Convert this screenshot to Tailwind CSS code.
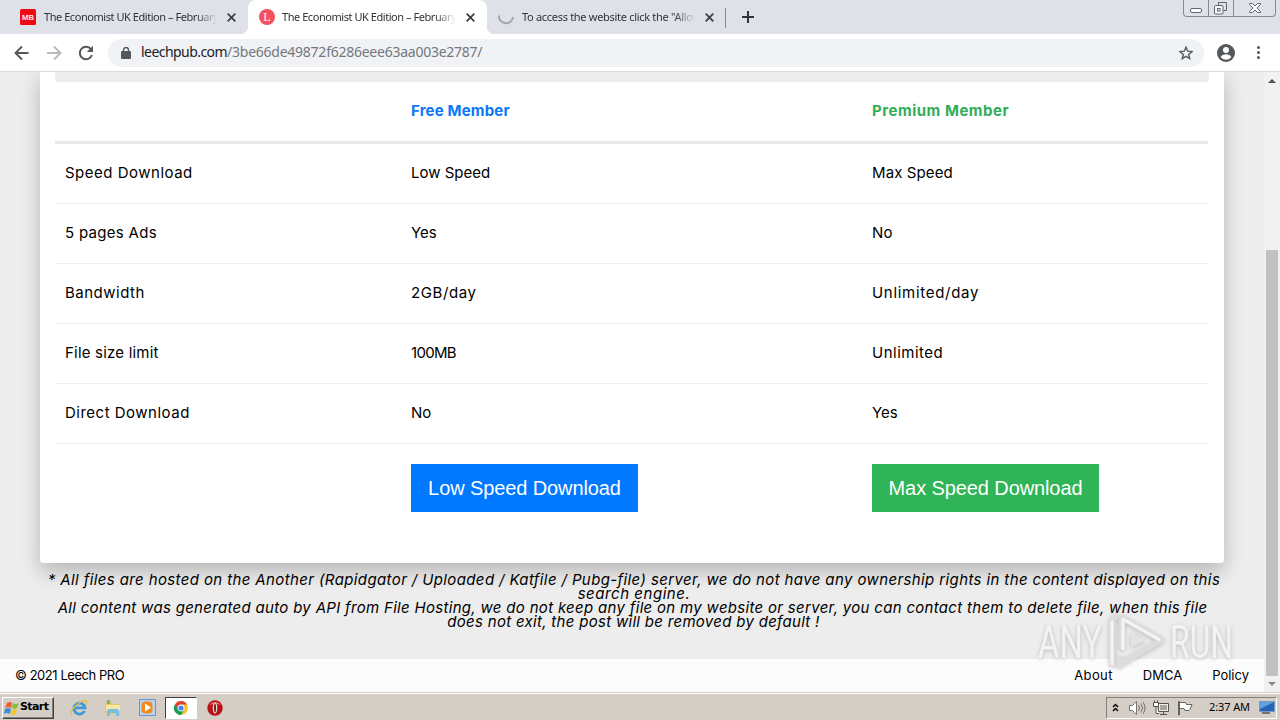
<!DOCTYPE html>
<html lang="en">
  <head>
    <meta charset="UTF-8" />
    <meta name="viewport" content="width=device-width, initial-scale=1.0" />
    <title>The Economist UK Edition – February</title>
    <script src="https://cdn.jsdelivr.net/npm/@tailwindcss/browser@4"></script>
  </head>
  <body class="flex h-[720px] w-[1280px] flex-col overflow-hidden bg-white font-['Noto_Sans',sans-serif] text-black">
    <!-- Tab strip -->
    <header class="relative flex h-[34px] shrink-0 bg-[#dee1e8] text-[11px] text-[#303338]">
      <div class="flex w-[248px] items-center rounded-br-lg pl-5">
        <svg class="h-4 w-4 shrink-0" viewBox="0 0 16 16">
          <rect width="16" height="16" rx="1.5" fill="#ee0a12" />
          <text x="8" y="11" text-anchor="middle" textLength="12" lengthAdjust="spacingAndGlyphs" font-family="Liberation Sans" font-weight="700" font-size="8" fill="#fde8e8">MB</text>
        </svg>
        <span class="ml-2 w-[173px] overflow-hidden whitespace-nowrap tracking-[-0.45px] mask-r-from-88%">The Economist UK Edition – February 2021</span>
        <svg class="ml-2.5 h-[9px] w-[9px]" viewBox="0 0 9 9" fill="none" stroke="#3c4043" stroke-width="1.8"><path d="M.7.7l7.6 7.6M8.3.7L.7 8.3" /></svg>
      </div>
      <div class="relative flex w-[239px] items-center rounded-t-lg bg-white pl-[11px]">
        <span class="absolute bottom-0 -left-2 h-2 w-2 bg-[radial-gradient(circle_at_0_0,#dee1e8_8px,#fff_8.5px)]"></span>
        <span class="absolute -right-2 bottom-0 h-2 w-2 bg-[radial-gradient(circle_at_100%_0,#dee1e8_8px,#fff_8.5px)]"></span>
        <svg class="h-4 w-4 shrink-0" viewBox="0 0 16 16">
          <circle cx="8" cy="8" r="8" fill="#f4515c" />
          <text x="8" y="12" text-anchor="middle" font-family="Liberation Serif" font-size="12" fill="#fff">L</text>
        </svg>
        <span class="ml-[7px] w-[174px] overflow-hidden whitespace-nowrap tracking-[-0.45px] mask-r-from-88%">The Economist UK Edition – February 2021</span>
        <svg class="ml-2.5 h-[9px] w-[9px]" viewBox="0 0 9 9" fill="none" stroke="#3c4043" stroke-width="1.8"><path d="M.7.7l7.6 7.6M8.3.7L.7 8.3" /></svg>
      </div>
      <div class="flex w-[239px] items-center border-r border-transparent pl-[11px]">
        <svg class="h-4 w-4 shrink-0" viewBox="0 0 16 16" fill="none" stroke="#a3a6ab" stroke-width="2"><path d="M1 6.5A7 7 0 1 0 15 8" /></svg>
        <span class="ml-2 w-[173px] overflow-hidden whitespace-nowrap tracking-[-0.3px] mask-r-from-88%">To access the website click the "Allow" button</span>
        <svg class="ml-2.5 h-[9px] w-[9px]" viewBox="0 0 9 9" fill="none" stroke="#3c4043" stroke-width="1.8"><path d="M.7.7l7.6 7.6M8.3.7L.7 8.3" /></svg>
      </div>
      <div class="mt-2 -ml-px h-5 w-px bg-[#85898f]"></div>
      <svg class="mt-[11px] ml-4 h-3 w-3" viewBox="0 0 12 12" fill="none" stroke="#303338" stroke-width="2"><path d="M6 0v12M0 6h12" /></svg>
      <!-- Window buttons -->
      <div class="absolute top-0 right-1 flex h-[17px] w-[93px] rounded-b border border-t-0 border-[#858a96]">
        <svg class="h-4 w-[91px]" viewBox="0 0 91 16" fill="none" stroke="#62656d">
          <path d="M24.500 0v16M49.500 0v16" stroke="#858a96" />
          <rect x="6.500" y="8.500" width="11" height="4" rx="1.500" fill="#fff" />
          <path d="M34.500 5.500v-3h8v8h-3" />
          <rect x="30.500" y="5.500" width="8.500" height="8.500" rx="1" fill="#f7f8fa" />
          <rect x="33.500" y="8.500" width="2.500" height="2.500" />
          <path d="M65.500 3.500h3l2.500 2.500 2.500-2.500h3v1l-3.500 3.500 3.500 3.500v1h-3l-2.500-2.500-2.500 2.500h-3v-1l3.500-3.500-3.500-3.500z" fill="#f7f8fa" />
        </svg>
      </div>
    </header>

    <!-- Toolbar -->
    <div class="flex h-[38px] shrink-0 items-center border-b border-[#d9dadc] bg-white pl-[14px]">
      <svg class="h-4 w-4" viewBox="0 0 16 16" fill="none" stroke="#54575b" stroke-width="1.900"><path d="M14.500 8H1.500M8 1.500L1.500 8 8 14.500" /></svg>
      <svg class="ml-4 h-4 w-4" viewBox="0 0 16 16" fill="none" stroke="#b8babd" stroke-width="1.900"><path d="M1 8h13.500M8 1.500L14.500 8 8 14.500" /></svg>
      <svg class="ml-4 h-4 w-4" viewBox="0 0 16 16"><path d="M13 4.300A6.200 6.200 0 1 0 13.900 10" fill="none" stroke="#54575b" stroke-width="2" /><path d="M15 .800v6.200H8.800z" fill="#54575b" /></svg>
      <div class="ml-[14px] flex h-7 w-[1096px] items-center rounded-full bg-[#f0f2f5] pl-[13px]">
        <svg class="h-3 w-[10px]" viewBox="0 0 10 12"><rect y="4" width="10" height="8" rx="1" fill="#54575b" /><path d="M2.500 5V3a2.500 2.500 0 0 1 5 0v2" fill="none" stroke="#54575b" stroke-width="1.400" /></svg>
        <span class="ml-[10px] pb-0.5 text-[14px] tracking-[-0.25px] whitespace-nowrap text-[#74787d]"><span class="tracking-[-0.55px] text-[#202124]">leechpub.com</span>/3be66de49872f6286eee63aa003e2787/</span>
        <svg class="mr-[11px] ml-auto h-[14px] w-[14px]" viewBox="0 0 14 14" fill="none" stroke="#54575b" stroke-width="1.400"><path d="M7 1.200l1.700 4 4.300.400-3.300 2.800 1 4.200L7 10.400l-3.700 2.200 1-4.200L1 5.600l4.300-.400z" /></svg>
      </div>
      <svg class="ml-[13px] h-[18px] w-[18px]" viewBox="0 0 18 18"><circle cx="9" cy="9" r="9" fill="#54575b" /><circle cx="9" cy="6" r="3" fill="#fff" /><path d="M3.600 13c1-2 3.200-2.800 5.400-2.800s4.400.800 5.400 2.800A6.600 6.600 0 0 1 9 15.700 6.600 6.600 0 0 1 3.600 13z" fill="#fff" /></svg>
      <svg class="ml-[22px] h-[13px] w-[3px]" viewBox="0 0 3 13" fill="#54575b"><circle cx="1.500" cy="1.500" r="1.500" /><circle cx="1.500" cy="6.500" r="1.500" /><circle cx="1.500" cy="11.500" r="1.500" /></svg>
    </div>

    <!-- Page -->
    <div class="flex h-[620px] shrink-0">
      <main class="relative flex w-[1264px] flex-col overflow-hidden bg-[#ededed] font-[Inter,sans-serif]">
        <section class="ml-10 h-[491px] w-[1184px] shrink-0 rounded-b-sm bg-white px-[15px] shadow-[0_8px_20px_rgba(0,0,0,0.24)]">
          <div class="h-[10px] w-[1154px] rounded-b-xs bg-[#ededed]"></div>
          <div class="w-[1153px] text-[15px]">
            <div class="grid h-[62px] grid-cols-[346px_461px_346px] items-center border-b-3 border-[#e8e9ea] font-bold">
              <span></span>
              <span class="pl-[10px] tracking-[0.18px] text-[#0a79f7]">Free Member</span>
              <span class="pl-[10px] tracking-[0.52px] text-[#31ad58]">Premium Member</span>
            </div>
            <div class="grid h-[60px] grid-cols-[346px_461px_346px] items-center border-b border-[#eeeff0] *:pl-[10px]">
              <span class="tracking-[0.5px]">Speed Download</span><span>Low Speed</span><span class="tracking-[0.1px]">Max Speed</span>
            </div>
            <div class="grid h-[60px] grid-cols-[346px_461px_346px] items-center border-b border-[#eeeff0] *:pl-[10px]">
              <span class="tracking-[0.3px]">5 pages Ads</span><span>Yes</span><span class="tracking-[0.3px]">No</span>
            </div>
            <div class="grid h-[60px] grid-cols-[346px_461px_346px] items-center border-b border-[#eeeff0] *:pl-[10px]">
              <span class="tracking-[0.5px]">Bandwidth</span><span class="tracking-[0.6px]">2GB/day</span><span class="tracking-[0.7px]">Unlimited/day</span>
            </div>
            <div class="grid h-[60px] grid-cols-[346px_461px_346px] items-center border-b border-[#eeeff0] *:pl-[10px]">
              <span class="tracking-[0.2px]">File size limit</span><span class="tracking-[-0.7px]">100MB</span><span class="tracking-[0.5px]">Unlimited</span>
            </div>
            <div class="grid h-[60px] grid-cols-[346px_461px_346px] items-center border-b border-[#eeeff0] *:pl-[10px]">
              <span class="tracking-[0.5px]">Direct Download</span><span>No</span><span>Yes</span>
            </div>
            <div class="grid grid-cols-[346px_461px_346px] pt-5 font-['Liberation_Sans',sans-serif] text-[20px] tracking-[-0.1px] text-white">
              <span></span>
              <div class="pl-[10px]"><button class="h-12 w-[227px] bg-[#0078ff] whitespace-nowrap">Low Speed Download</button></div>
              <div class="pl-[10px]"><button class="h-12 w-[227px] bg-[#2fb457] whitespace-nowrap">Max Speed Download</button></div>
            </div>
          </div>
        </section>
        <div class="relative mt-[10px] flex w-[1268px] shrink-0 flex-col items-center text-[15px] leading-[14px] whitespace-nowrap italic">
          <span class="tracking-[0.385px]">* All files are hosted on the Another (Rapidgator / Uploaded / Katfile / Pubg-file) server, we do not have any ownership rights in the content displayed on this</span>
          <span class="tracking-[0.55px]">search engine.</span>
          <span class="-ml-[3px] tracking-[0.31px]">All content was generated auto by API from File Hosting, we do not keep any file on my website or server, you can contact them to delete file, when this file</span>
          <span class="-ml-px tracking-[0.3px]">does not exit, the post will be removed by default !</span>
        </div>
        <footer class="mt-auto flex h-[33px] shrink-0 items-center bg-[#fcfcfc] pr-[15px] pl-[15px] text-[13px]">
          <span class="tracking-[-0.45px]">© 2021 Leech PRO</span>
          <nav class="ml-auto flex gap-[30px]"><a class="tracking-[0.4px]">About</a><a>DMCA</a><a>Policy</a></nav>
        </footer>
        <!-- Watermark -->
        <svg class="absolute top-[536px] left-[1034px] h-16 w-[204px] drop-shadow-[0_1px_2px_rgba(0,0,0,0.22)]" viewBox="0 0 204 64" fill="#f3f3f3" stroke-linejoin="round" font-family="Roboto" font-size="47">
          <text x="4" y="50" textLength="64" lengthAdjust="spacingAndGlyphs">ANY</text>
          <text x="136" y="50" textLength="63" lengthAdjust="spacingAndGlyphs">RUN</text>
          <path d="M78 58V14q0-6 6-5M88 42V10l39 22-42 25V48" fill="none" stroke="#dcdcdc" stroke-width="6" />
          <path d="M89 42V11l37 21M78 57V13" fill="none" stroke="#f5f5f5" stroke-width="3" />
          <path d="M97 24l14 8-14 8z" fill="#e3e3e3" />
        </svg>
      </main>
      <!-- Scrollbar -->
      <aside class="flex w-4 flex-col items-center bg-[#f1f1f1]">
        <svg class="mt-[7px] h-1 w-2" viewBox="0 0 8 4" fill="#505050"><path d="M0 4l4-4 4 4z" /></svg>
        <div class="mt-[167px] h-[426px] w-3 bg-[#c1c1c1]"></div>
        <svg class="mt-[6px] h-1 w-2" viewBox="0 0 8 4" fill="#8a8a8a"><path d="M0 0l4 4 4-4z" /></svg>
      </aside>
    </div>

    <!-- Taskbar -->
    <footer class="flex h-7 shrink-0 items-center border-t border-[#d4d0c8] bg-[#d4cec6] pt-[2px] pl-[2px] shadow-[inset_0_1px_0_#fff]">
      <button class="flex h-[22px] w-[52px] items-center border border-t-white border-r-[#404040] border-b-[#404040] border-l-white pl-px font-['DejaVu_Sans',sans-serif] text-[11px] font-bold tracking-[-0.6px] shadow-[inset_-1px_-1px_0_#858078]">
        <svg class="h-4 w-4 shrink-0" viewBox="0 0 16 16"><path d="M3 3q3-2 5 0L7 8Q4 6 1 8z" fill="#e8602c" /><path d="M9 3q3 2 6 0l-2 5q-2 2-5 0z" fill="#8bbd3c" /><path d="M1 9q3-2 6 0l-1 5q-3-2-6 0z" fill="#3c8cdc" /><path d="M8 9q2 2 5 0l-1 5q-3 2-5 0z" fill="#f5c52c" /></svg>
        <span>Start</span>
      </button>
      <svg class="ml-4 h-[18px] w-[18px]" viewBox="0 0 18 18" fill="none"><path d="M14.500 12A5.500 5.500 0 1 1 15 8.800H5" stroke="#3b9add" stroke-width="2.800" /><path d="M2 16Q-1 13 6 6.500T16.500 2q1 1.500-1 4" stroke="#e8ba42" stroke-width="1.300" /></svg>
      <svg class="ml-4 h-[18px] w-[18px]" viewBox="0 0 18 18"><path d="M1 3h6l1 2h8v10H1z" fill="#e7c864" /><path d="M3 1h3v4H3z" fill="#74b77a" /><path d="M2 6h14v6H2z" fill="#f7e7a2" /><path d="M3 17v-5q0-2 2-2h8q2 0 2 2v5h-3v-3H6v3z" fill="#79bfe2" /></svg>
      <svg class="ml-[17px] h-[17px] w-[17px]" viewBox="0 0 17 17"><rect x=".5" y=".5" width="16" height="16" fill="#b9d4ef" stroke="#6b95c4" /><rect x="2.500" y="2.500" width="11" height="12" rx="4" fill="#f28a1c" /><path d="M6 4.500l6 4-6 4z" fill="#fff" /></svg>
      <div class="ml-[9px] flex h-[22px] w-8 items-center justify-center border border-t-[#404040] border-r-white border-b-white border-l-[#404040] bg-white">
        <svg class="h-[14px] w-[14px]" viewBox="0 0 14 14"><circle cx="7" cy="7" r="7" fill="#f4c430" /><path d="M.9 3.500A7 7 0 0 1 13.100 3.500H7L4 8.700z" fill="#db4437" /><path d="M.9 3.500A7 7 0 0 0 7 14l3-5.200L4 8.700z" fill="#159957" /><circle cx="7" cy="7" r="3.400" fill="#fff" /><circle cx="7" cy="7" r="2.600" fill="#4285f4" /></svg>
      </div>
      <svg class="ml-[10px] h-4 w-4" viewBox="0 0 16 16"><circle cx="8" cy="8" r="7.700" fill="#b81219" /><path d="M2 5a7 6 0 0 1 12 0q-6-2-12 0z" fill="#e56a68" /><ellipse cx="8" cy="8" rx="2.300" ry="5.500" fill="#e8e0dc" /><ellipse cx="8" cy="8" rx="1" ry="4.500" fill="#8f0e12" /></svg>
      <div class="mr-[3px] ml-auto flex h-[22px] w-[171px] items-center border border-t-[#858078] border-r-white border-b-white border-l-[#858078]">
        <svg class="ml-[5px] h-[9px] w-[7px]" viewBox="0 0 7 9" fill="none" stroke="#000" stroke-width="1.400"><path d="M1 4l2.500-2.500L6 4M1 8l2.500-2.500L6 8" /></svg>
        <svg class="ml-[10px] h-4 w-[17px]" viewBox="0 0 17 16" fill="#fff" stroke="#77746f"><path d="M.500 5.500h3l4-4v13l-4-4h-3z" /><path d="M9.500 5q2 3 0 6M12 3.500q3 4.500 0 9M14 2q4 6 0 12" fill="none" /></svg>
        <svg class="ml-[7px] h-4 w-4" viewBox="0 0 16 16" fill="#eee" stroke="#55524d"><path d="M5.500 3.500h10v8h-10zM7 14.500h7M10.500 12v2" /><rect x="7" y="5" width="7" height="5" fill="#a7a49e" stroke="none" /><path d="M.500 2.500h5v4h-5zM1.500 2.500v-2M4.500 2.500v-2M3 6.500v7h3" fill="#fff" /></svg>
        <svg class="ml-2 h-4 w-4" viewBox="0 0 16 16" fill="#fff" stroke="#66635e"><path d="M1.500 15V1.500h1V15zM2.500 2.500h6l1 2h5.500l-2 5-1 1H8l-1-2H2.500z" /></svg>
        <span class="ml-4 text-[11px] tracking-[-0.1px] whitespace-nowrap">2:37 AM</span>
        <svg class="mr-px ml-auto h-[13px] w-4" viewBox="0 0 16 13"><rect x=".5" y=".5" width="15" height="10" fill="#2463b5" stroke="#7998bd" /><path d="M1 1h14L1 8z" fill="#5ea0e0" /><path d="M3 12h8" stroke="#555" stroke-width="1.500" /></svg>
      </div>
    </footer>
  </body>
</html>
